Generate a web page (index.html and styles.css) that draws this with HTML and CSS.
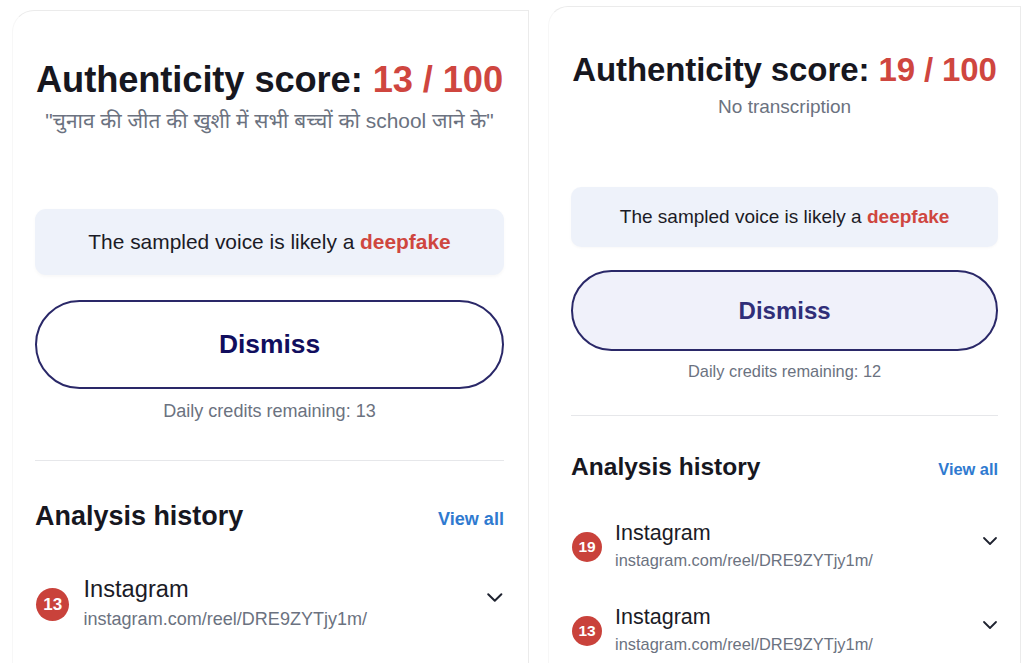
FILE: index.html
```html
<!DOCTYPE html>
<html lang="en">
<head>
    <meta charset="UTF-8">
    <meta name="viewport" content="width=device-width, initial-scale=1.0">
    <title>Voice check</title>
    <link rel="stylesheet" href="styles.css">
</head>
<body>
    <div class="panels">
        <section class="panel panel-zoomed">
            <h1 class="score-title">Authenticity score: <span class="score-value">13 / 100</span></h1>
            <p class="transcript">"चुनाव की जीत की खुशी में सभी बच्चों को school जाने के"</p>
            <div class="verdict">The sampled voice is likely a <strong>deepfake</strong></div>
            <button class="dismiss-btn">Dismiss</button>
            <p class="credits">Daily credits remaining: 13</p>
            <hr class="divider">
            <div class="history-head">
                <h2>Analysis history</h2>
                <a href="#" class="view-all">View all</a>
            </div>
            <ul class="history">
                <li class="history-item">
                    <span class="badge">13</span>
                    <div class="item-text">
                        <div class="item-source">Instagram</div>
                        <div class="item-url">instagram.com/reel/DRE9ZYTjy1m/</div>
                    </div>
                    <svg class="chevron" width="16" height="10" viewBox="0 0 16 10"><path d="M2 2l6 6 6-6" fill="none" stroke="#1f2330" stroke-width="1.8" stroke-linecap="round" stroke-linejoin="round"/></svg>
                </li>
            </ul>
        </section>

        <section class="panel">
            <h1 class="score-title">Authenticity score: <span class="score-value">19 / 100</span></h1>
            <p class="transcript">No transcription</p>
            <div class="verdict">The sampled voice is likely a <strong>deepfake</strong></div>
            <button class="dismiss-btn hover">Dismiss</button>
            <p class="credits">Daily credits remaining: 12</p>
            <hr class="divider">
            <div class="history-head">
                <h2>Analysis history</h2>
                <a href="#" class="view-all">View all</a>
            </div>
            <ul class="history">
                <li class="history-item">
                    <span class="badge">19</span>
                    <div class="item-text">
                        <div class="item-source">Instagram</div>
                        <div class="item-url">instagram.com/reel/DRE9ZYTjy1m/</div>
                    </div>
                    <svg class="chevron" width="16" height="10" viewBox="0 0 16 10"><path d="M2 2l6 6 6-6" fill="none" stroke="#1f2330" stroke-width="1.8" stroke-linecap="round" stroke-linejoin="round"/></svg>
                </li>
                <li class="history-item">
                    <span class="badge">13</span>
                    <div class="item-text">
                        <div class="item-source">Instagram</div>
                        <div class="item-url">instagram.com/reel/DRE9ZYTjy1m/</div>
                    </div>
                    <svg class="chevron" width="16" height="10" viewBox="0 0 16 10"><path d="M2 2l6 6 6-6" fill="none" stroke="#1f2330" stroke-width="1.8" stroke-linecap="round" stroke-linejoin="round"/></svg>
                </li>
            </ul>
        </section>
    </div>
</body>
</html>
```

FILE: styles.css
```css
html, body { margin: 0; padding: 0; background: #fff; overflow: hidden; height: 663px; }
body { font-family: "Liberation Sans", "Noto Sans Devanagari", "Noto Sans", Arial, sans-serif; color: #1b1b26; }
.panels { display: flex; align-items: flex-start; }

.panel { width: 473px; box-sizing: border-box; min-height: 720px; padding: 44px 22px 0; border: 1px solid #ebebeb; border-left-color: #f7f7f7; border-bottom: none; border-top-left-radius: 20px; margin: 6px 0 0 19px; text-align: center; }
.panel-zoomed { zoom: 1.1; margin: 9px 0 0 11px; width: 470px; padding-left: 20px; }

.score-title { margin: 0 -10px; font-size: 33px; line-height: 38px; font-weight: 700; color: #17171f; letter-spacing: -0.1px; white-space: nowrap; }
.score-value { color: #cf463f; }
.transcript { margin: 7px 0 0; font-size: 19px; line-height: 22px; color: #6b7280; white-space: nowrap; }

.verdict { margin-top: 69px; height: 60px; line-height: 60px; background: #eef2fa; border-radius: 10px; font-size: 19px; color: #1b1b26; box-shadow: 0 1px 3px rgba(0,0,0,0.03); }
.verdict strong { color: #cf463f; }

.dismiss-btn { display: block; width: 100%; height: 81px; margin-top: 23px; border: 2px solid #2a2868; border-radius: 41px; background: #fff; font-family: inherit; font-size: 24px; font-weight: 700; color: #110e5e; cursor: pointer; }
.dismiss-btn.hover { background: #f0f1fa; color: #302e78; }

.credits { margin: 10px 0 0; font-size: 16.4px; line-height: 20px; color: #6b7280; }
.divider { margin: 34px 0 0; border: none; border-top: 1px solid #e6e7ea; }

.history-head { display: flex; justify-content: space-between; align-items: baseline; margin-top: 36px; text-align: left; }
.history-head h2 { margin: 0; font-size: 24.5px; line-height: 30px; font-weight: 700; color: #17171f; }
.view-all { font-size: 16.4px; font-weight: 700; color: #2f7ad0; text-decoration: none; }

.history { list-style: none; padding: 0; margin: 38px 0 0; text-align: left; }
.history-item { display: flex; align-items: center; margin-bottom: 33px; }
.badge { width: 30px; height: 30px; border-radius: 50%; background: #c9423b; color: #fff; font-size: 15.5px; font-weight: 700; line-height: 30px; text-align: center; flex-shrink: 0; margin: 3px 13px 0 1px; }
.item-text { flex: 1; }
.item-source { font-size: 21.5px; line-height: 26px; color: #1b1b26; }
.item-url { margin-top: 3px; font-size: 16.4px; line-height: 22px; color: #6b7280; }
.chevron { margin: 0 0 10px; }
```
